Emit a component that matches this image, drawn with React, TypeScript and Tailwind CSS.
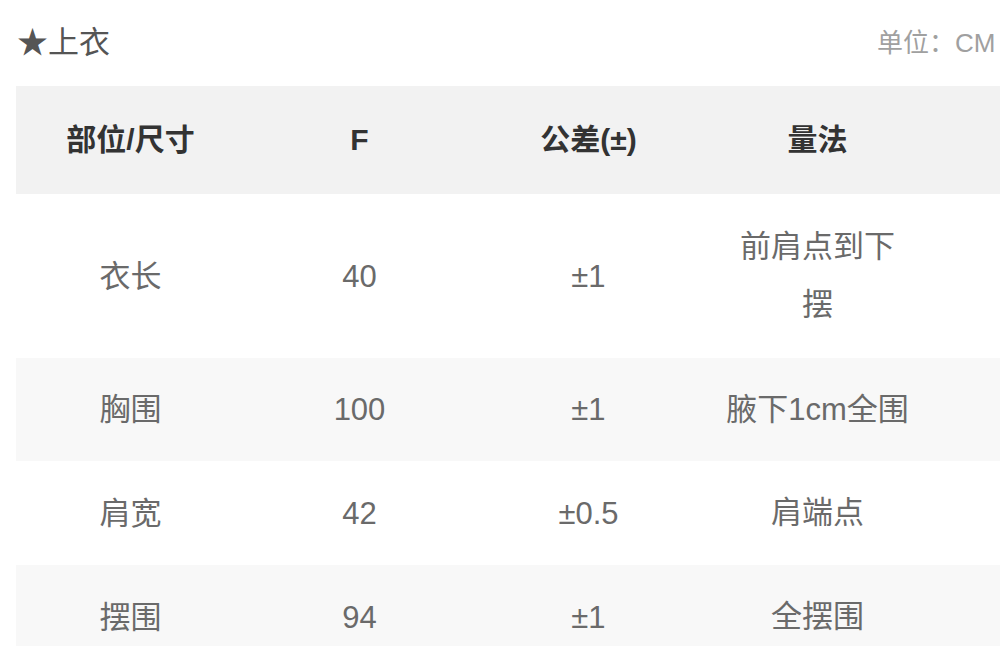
const rows: { part: string; size: string; tol: string; method: React.ReactNode; h: string; bg: string }[] = [
  {
    part: '衣长',
    size: '40',
    tol: '±1',
    method: (
      <>
        前肩点到下
        <br />
        摆
      </>
    ),
    h: 'h-[164px]',
    bg: 'bg-white',
  },
  { part: '胸围', size: '100', tol: '±1', method: '腋下1cm全围', h: 'h-[103px]', bg: 'bg-[#f8f8f8]' },
  { part: '肩宽', size: '42', tol: '±0.5', method: '肩端点', h: 'h-[104px]', bg: 'bg-white' },
  { part: '摆围', size: '94', tol: '±1', method: '全摆围', h: 'h-[104px]', bg: 'bg-[#f8f8f8]' },
];

const font = "font-['Liberation_Sans','Noto_Sans_CJK_SC',sans-serif]";

export default function App() {
  return (
    <div className={`w-[1000px] h-[646px] overflow-hidden bg-white ${font}`}>
      {/* Title bar */}
      <div className="flex items-center w-[1010px] h-[86px] pl-[17px]">
        <div className="flex-1 text-[31px] text-[#555] leading-none pb-[2px]">★上衣</div>
        <div className="w-[133px] shrink-0 text-[26px] text-[#a0a0a0] leading-none">单位：CM</div>
      </div>

      {/* Size table */}
      <div className="ml-[16px] w-[1100px]">
        <div className="grid grid-cols-[229px_229px_229px_229px_1fr] h-[108px] items-center bg-[#f2f2f2] text-[30px] font-semibold text-[#333] leading-none">
          <div className="text-center">部位/尺寸</div>
          <div className="text-center">F</div>
          <div className="text-center">公差(±)</div>
          <div className="text-center">量法</div>
          <div />
        </div>
        {rows.map((r) => (
          <div
            key={r.part}
            className={`grid grid-cols-[229px_229px_229px_229px_1fr] items-center ${r.h} ${r.bg} text-[31px] text-[#6a6a6a]`}
          >
            <div className="text-center leading-none">{r.part}</div>
            <div className="text-center leading-none">{r.size}</div>
            <div className="text-center leading-none">{r.tol}</div>
            <div className="text-center leading-[58px]">{r.method}</div>
            <div />
          </div>
        ))}
      </div>
    </div>
  );
}
